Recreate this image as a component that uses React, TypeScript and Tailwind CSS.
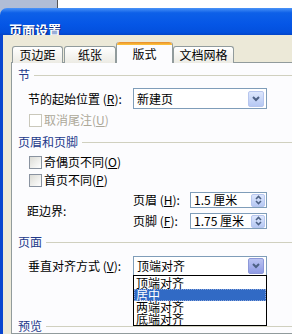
import React from "react";

function Chevron() {
  return (
    <svg width="8" height="6" viewBox="0 0 8 6">
      <path d="M1 1 L4 4 L7 1" stroke="#4d6185" strokeWidth="2" fill="none" />
    </svg>
  );
}

function ComboButton({ hot }: { hot?: boolean }) {
  return (
    <div
      className={
        hot
          ? "w-[16px] h-[16px] rounded-[2px] border border-[#8d98d9] bg-[linear-gradient(to_bottom,#bac3f2,#8f9be4)] flex items-center justify-center"
          : "w-[16px] h-[16px] rounded-[2px] border border-[#b7c6ee] bg-[linear-gradient(to_bottom,#dde7fd,#b6c8f3)] flex items-center justify-center"
      }
    >
      <Chevron />
    </div>
  );
}

function SpinButton() {
  return (
    <div className="w-[14px] h-[13px] rounded-[2px] border border-[#b7c6ee] bg-[linear-gradient(to_bottom,#dde7fd,#b6c8f3)] flex items-center justify-center">
      <svg width="7" height="10" viewBox="0 0 7 10">
        <path d="M1 4 L3.5 1.5 L6 4" stroke="#4d6185" strokeWidth="1.6" fill="none" />
        <path d="M1 6 L3.5 8.5 L6 6" stroke="#4d6185" strokeWidth="1.6" fill="none" />
      </svg>
    </div>
  );
}

function Header({ text }: { text: string }) {
  return (
    <div className="flex items-center h-[14px] pl-[6px]">
      <span className="text-[12px] leading-[14px] text-[#22398a]">{text}</span>
      <div className="flex-1 h-px bg-[#d0d0bf] ml-[4px]" />
    </div>
  );
}

function CheckRow({ label, keyChar, disabled }: { label: string; keyChar: string; disabled?: boolean }) {
  return (
    <div className="flex items-center h-[14px] pl-[17px]">
      <div
        className={
          disabled
            ? "w-[13px] h-[13px] border border-[#cac8bb] bg-white"
            : "w-[13px] h-[13px] border border-[#8a93a0] bg-[linear-gradient(135deg,#dcdcd6,#ffffff)]"
        }
      />
      <span
        className={
          disabled
            ? "ml-[2px] text-[12px] leading-[14px] text-[#aca899]"
            : "ml-[2px] text-[12px] leading-[14px] text-black"
        }
      >
        {label}(<span className="underline">{keyChar}</span>)
      </span>
    </div>
  );
}

export default function App() {
  return (
    <div className="w-[292px] h-[334px] overflow-hidden flex flex-col bg-white font-['Noto_Sans_CJK_SC','Liberation_Sans',sans-serif]">
      {/* background strip */}
      <div className="flex h-[8px] shrink-0">
        <div className="w-[57px] bg-[#b0bdd6]" />
        <div className="flex-1 bg-white border-l border-[#555]" />
      </div>
      <div className="flex-1 flex flex-col bg-[#b0bdd6]">
        {/* title bar */}
        <div className="h-[27px] shrink-0 rounded-tl-[7px] bg-[linear-gradient(to_bottom,#4a93f7_0%,#0d60e8_18%,#0556e6_60%,#0350dd_90%,#0344c8_100%)] pl-[9px] pt-[8px]">
          <span className="text-[13px] leading-[16px] font-bold text-white [text-shadow:1px_1px_0_#0a2a80]">
            页面设置
          </span>
        </div>
        {/* body */}
        <div className="flex-1 flex flex-col border-l-[3px] border-[#0846d0] bg-[#ece9d8] pl-[8px] pt-[8px]">
          {/* tabs */}
          <div className="flex items-end h-[20px] pl-[1px] relative z-10 -mb-px">
            <div className="w-[51px] h-[17px] border border-b-0 border-[#919b9c] rounded-t-[3px] bg-[linear-gradient(to_bottom,#ffffff,#ecebe4)] flex items-center justify-center text-[12px] leading-[14px] text-black">
              页边距
            </div>
            <div className="ml-[1px] w-[52px] h-[17px] border border-b-0 border-[#919b9c] rounded-t-[3px] bg-[linear-gradient(to_bottom,#ffffff,#ecebe4)] flex items-center justify-center text-[12px] leading-[14px] text-black">
              纸张
            </div>
            <div className="w-[57px] h-[21px] border-x border-[#919b9c] rounded-t-[3px] bg-[#fcfcfe] flex flex-col">
              <div className="h-[3px] rounded-t-[3px] bg-[linear-gradient(to_bottom,#e68b2c,#ffc73c)]" />
              <div className="flex-1 flex items-center justify-center text-[12px] leading-[14px] text-black">版式</div>
            </div>
            <div className="w-[61px] h-[17px] border border-b-0 border-[#919b9c] rounded-t-[3px] bg-[linear-gradient(to_bottom,#ffffff,#ecebe4)] flex items-center justify-center text-[12px] leading-[14px] text-black">
              文档网格
            </div>
          </div>
          {/* panel */}
          <div className="flex-1 w-[300px] border border-[#919b9c] bg-[#fcfcfe] flex flex-col pt-[5px]">
            <Header text="节" />
            <div className="mt-[6px] flex items-center h-[21px] pl-[16px]">
              <span className="w-[105px] text-[12px] leading-[14px] text-black">
                节的起始位置 (<span className="underline">R</span>):
              </span>
              <div className="w-[134px] h-[21px] border border-[#7f9db9] bg-white flex items-center pl-[3px] pr-[2px]">
                <span className="flex-1 text-[12px] leading-[14px] text-black">新建页</span>
                <ComboButton />
              </div>
            </div>
            <div className="mt-[4px]">
              <CheckRow label="取消尾注" keyChar="U" disabled />
            </div>
            <div className="mt-[8px]">
              <Header text="页眉和页脚" />
            </div>
            <div className="mt-[6px]">
              <CheckRow label="奇偶页不同" keyChar="O" />
            </div>
            <div className="mt-[4px]">
              <CheckRow label="首页不同" keyChar="P" />
            </div>
            <div className="mt-[5px] flex h-[36px] pl-[15px]">
              <div className="w-[106px] flex items-center pt-[2px] text-[12px] leading-[14px] text-black">距边界:</div>
              <div className="flex flex-col gap-[5px]">
                <div className="flex items-center h-[16px]">
                  <span className="w-[57px] text-[12px] leading-[14px] text-black">
                    页眉 (<span className="underline">H</span>):
                  </span>
                  <div className="w-[77px] h-[16px] border border-[#7f9db9] bg-white flex items-center pl-[3px] pr-[1px]">
                    <span className="flex-1 text-[12px] leading-[14px] text-black">1.5 厘米</span>
                    <SpinButton />
                  </div>
                </div>
                <div className="flex items-center h-[16px]">
                  <span className="w-[57px] text-[12px] leading-[14px] text-black">
                    页脚 (<span className="underline">F</span>):
                  </span>
                  <div className="w-[77px] h-[16px] border border-[#7f9db9] bg-white flex items-center pl-[3px] pr-[1px]">
                    <span className="flex-1 text-[12px] leading-[14px] text-black">1.75 厘米</span>
                    <SpinButton />
                  </div>
                </div>
              </div>
            </div>
            <div className="mt-[7px]">
              <Header text="页面" />
            </div>
            <div className="mt-[7px] flex items-center h-[20px] pl-[16px] relative">
              <span className="w-[105px] text-[12px] leading-[14px] text-black">
                垂直对齐方式 (<span className="underline">V</span>):
              </span>
              <div className="w-[134px] h-[20px] border border-[#7f9db9] bg-white flex items-center pl-[3px] pr-[2px] relative">
                <span className="flex-1 text-[12px] leading-[14px] text-black">顶端对齐</span>
                <ComboButton hot />
                <div className="absolute left-[-1px] top-[18px] w-[134px] h-[51px] border border-black bg-white z-20 flex flex-col py-px">
                  <div className="h-[12px] pl-[2px] text-[12px] leading-[12px] text-black">顶端对齐</div>
                  <div className="h-[12px] pl-[2px] text-[12px] leading-[12px] text-white bg-[#316ac5] outline-1 outline-dotted outline-[#8aa4d8] -outline-offset-1">
                    居中
                  </div>
                  <div className="h-[12px] pl-[2px] text-[12px] leading-[12px] text-black">两端对齐</div>
                  <div className="h-[12px] pl-[2px] text-[12px] leading-[12px] text-black">底端对齐</div>
                </div>
              </div>
            </div>
            <div className="mt-[43px]">
              <Header text="预览" />
            </div>
          </div>
        </div>
      </div>
    </div>
  );
}
